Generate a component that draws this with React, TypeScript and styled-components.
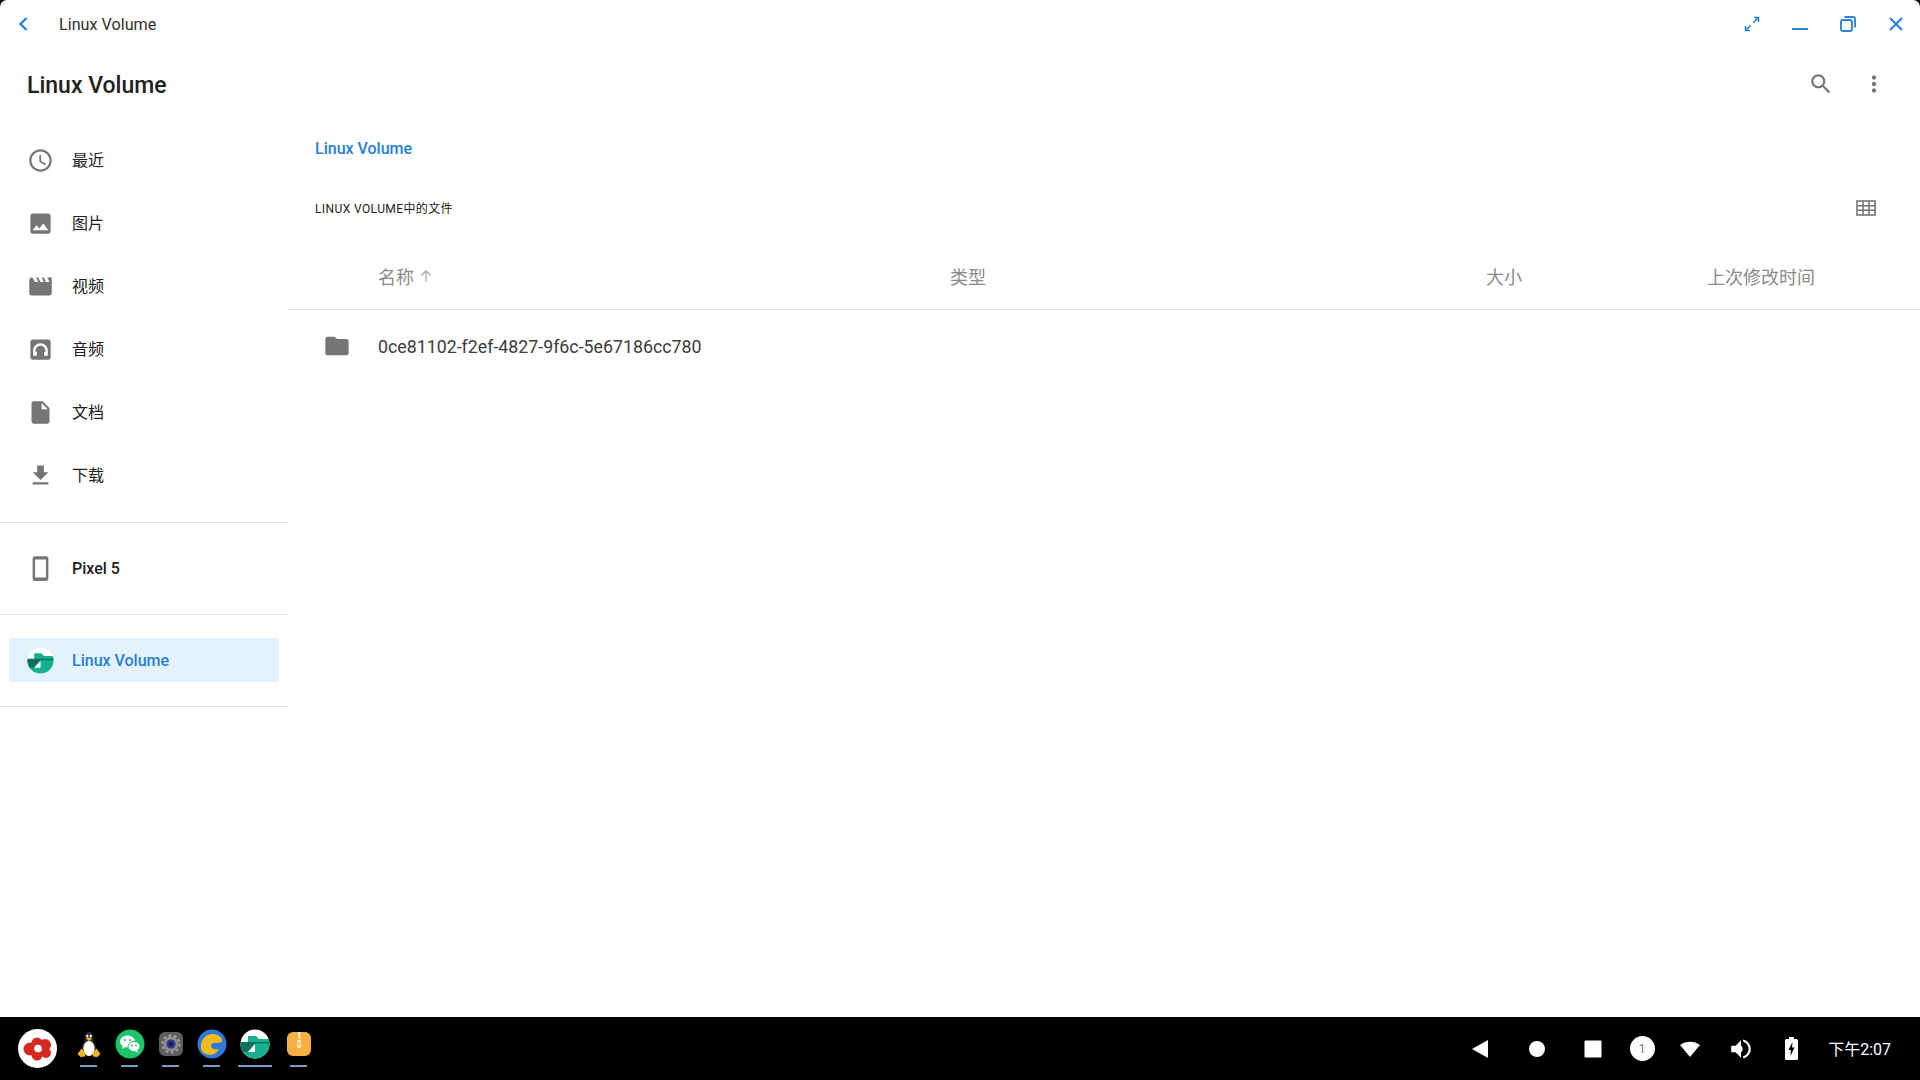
import React from 'react';
import styled, { createGlobalStyle } from 'styled-components';

const GlobalStyle = createGlobalStyle`
  html, body {
    margin: 0;
    height: 100%;
    background: #000;
  }
  body {
    font-family: Roboto, "Noto Sans CJK SC", sans-serif;
    overflow: hidden;
  }
`;

const Screen = styled.div`
  width: 1920px;
  height: 1080px;
  display: flex;
  flex-direction: column;
  background: #000;
`;

const AppWindow = styled.div`
  height: 1017px;
  display: flex;
  flex-direction: column;
  background: #fff;
  border-radius: 7px 7px 0 0;
  overflow: hidden;
`;

const TitleBar = styled.div`
  height: 48px;
  display: flex;
  align-items: center;
`;

const BackButton = styled.div`
  width: 46px;
  height: 48px;
  display: flex;
  align-items: center;
  justify-content: center;
  color: #2680d4;
`;

const WindowTitle = styled.div`
  flex: 1;
  margin-left: 13px;
  font-size: 16.2px;
  color: #303030;
`;

const WindowButton = styled.div`
  width: 48px;
  height: 48px;
  display: flex;
  align-items: center;
  justify-content: center;
  color: #2b84d8;
`;

const Toolbar = styled.div`
  height: 72px;
  display: flex;
  align-items: center;
  padding: 0 20px 0 27px;
`;

const ToolbarTitle = styled.h1`
  flex: 1;
  margin: 0;
  padding-top: 3px;
  font-size: 23px;
  font-weight: 500;
  color: #212121;
`;

const ToolbarAction = styled.div`
  width: 53px;
  height: 48px;
  display: flex;
  align-items: center;
  justify-content: center;
  color: #757575;
`;

const Body = styled.div`
  flex: 1;
  display: flex;
  min-height: 0;
`;

const Sidebar = styled.nav`
  width: 288px;
  flex-shrink: 0;
`;

const NavSection = styled.div<{ $first?: boolean }>`
  padding: ${(p) => (p.$first ? '9px 0 15px' : '14px 0')};
  border-bottom: 1px solid #e0e0e0;
`;

const NavRow = styled.div<{ $active?: boolean }>`
  height: ${(p) => (p.$active ? '44px' : '63px')};
  margin: ${(p) => (p.$active ? '9px 9px 10px' : '0')};
  padding-left: ${(p) => (p.$active ? '18px' : '27px')};
  display: flex;
  align-items: center;
  gap: 18px;
  background: ${(p) => (p.$active ? '#e3f2fd' : 'transparent')};
  border-radius: 2px;
  color: ${(p) => (p.$active ? '#2680d4' : '#212121')};
`;

const NavIcon = styled.span`
  width: 27px;
  height: 27px;
  display: flex;
  color: #757575;
`;

const NavLabel = styled.span<{ $strong?: boolean; $cjk?: boolean }>`
  font-size: 16px;
  font-weight: ${(p) => (p.$strong ? 500 : 400)};
  margin-bottom: ${(p) => (p.$cjk ? '3px' : '0')};
`;

const Main = styled.main`
  flex: 1;
  min-width: 0;
`;

const Breadcrumb = styled.div`
  height: 56px;
  display: flex;
  align-items: center;
  padding-left: 27px;
  font-size: 16px;
  font-weight: 500;
  color: #2680d4;
`;

const SectionHead = styled.div`
  height: 64px;
  display: flex;
  align-items: center;
  justify-content: space-between;
  padding: 0 44px 0 27px;
  color: #757575;
`;

const SectionLabel = styled.div`
  margin-bottom: 2px;
  font-size: 12px;
  letter-spacing: 0.4px;
  text-transform: uppercase;
  color: #212121;
`;

const tableColumns = '90px 572px 350px 222px 293px';

const TableHead = styled.div`
  margin-top: 4px;
  height: 66px;
  padding-bottom: 2px;
  box-sizing: border-box;
  display: grid;
  grid-template-columns: ${tableColumns};
  align-items: center;
  border-bottom: 1px solid #e0e0e0;
  font-size: 18px;
  color: #8a8a8a;
`;

const HeadCell = styled.div<{ $column: number; $right?: boolean }>`
  grid-column: ${(p) => p.$column};
  display: flex;
  align-items: center;
  gap: 5px;
  justify-content: ${(p) => (p.$right ? 'flex-end' : 'flex-start')};
`;

const FileRow = styled.div`
  height: 72px;
  display: grid;
  grid-template-columns: ${tableColumns};
  align-items: center;
`;

const FileIcon = styled.div`
  display: flex;
  justify-content: center;
  padding-left: 8px;
  color: #757575;
`;

const FileName = styled.div`
  grid-column: 2 / 4;
  font-size: 17.8px;
  color: #3c3c3c;
`;

const Taskbar = styled.footer`
  height: 63px;
  display: flex;
  align-items: center;
`;

const Launcher = styled.div`
  width: 39px;
  height: 39px;
  margin: 0 11px 0 18px;
  border-radius: 50%;
  background: #fff;
  display: flex;
  align-items: center;
  justify-content: center;
`;

const Apps = styled.div`
  flex: 1;
  display: flex;
  align-items: flex-start;
  height: 63px;
  padding-top: 12px;
  box-sizing: border-box;
`;

const AppSlot = styled.div<{ $wide?: boolean }>`
  width: ${(p) => (p.$wide ? 46 : 41)}px;
  display: flex;
  flex-direction: column;
  align-items: center;
`;

const AppIcon = styled.div`
  height: 30px;
  display: flex;
  align-items: center;
  justify-content: center;
`;

const AppBar = styled.div<{ $wide?: boolean }>`
  width: ${(p) => (p.$wide ? 34 : 17)}px;
  height: 2px;
  margin-top: 6px;
  background: #6f9fc4;
`;

const Tray = styled.div`
  display: flex;
  align-items: center;
  padding-right: 29px;
`;

const TraySlot = styled.div<{ $width: number }>`
  width: ${(p) => p.$width}px;
  display: flex;
  justify-content: center;
  color: #fff;
`;

const NoticeBadge = styled.div`
  width: 25px;
  height: 25px;
  border-radius: 50%;
  background: #fff;
  color: #777;
  font-size: 12px;
  display: flex;
  align-items: center;
  justify-content: center;
`;

const Clock = styled.div`
  margin: 0 0 2px 11px;
  font-size: 16px;
  color: #fff;
`;

const Glyph = ({ d, size = 27 }: { d: string; size?: number }) => (
  <svg width={size} height={size} viewBox="0 0 24 24" fill="currentColor" fillRule="evenodd">
    <path d={d} />
  </svg>
);

const navItems = [
  { label: '最近', d: 'M11.99 2C6.47 2 2 6.48 2 12s4.47 10 9.99 10C17.52 22 22 17.52 22 12S17.52 2 11.99 2zM12 20c-4.42 0-8-3.58-8-8s3.58-8 8-8 8 3.58 8 8-3.58 8-8 8zm.5-13H11v6l5.25 3.15.75-1.23-4.5-2.67z' },
  { label: '图片', d: 'M21 19V5c0-1.1-.9-2-2-2H5c-1.1 0-2 .9-2 2v14c0 1.1.9 2 2 2h14c1.1 0 2-.9 2-2zM8.5 13.5l2.5 3.01L14.5 12l4.5 6H5l3.5-4.5z' },
  { label: '视频', d: 'M18 4l2 4h-3l-2-4h-2l2 4h-3l-2-4H8l2 4H7L5 4H4c-1.1 0-1.99.9-1.99 2L2 18c0 1.1.9 2 2 2h16c1.1 0 2-.9 2-2V4h-4z' },
  { label: '音频', d: 'M5 3h14c1.1 0 2 .9 2 2v14c0 1.1-.9 2-2 2H5c-1.1 0-2-.9-2-2V5c0-1.1.9-2 2-2zM12 6.5C8.4 6.5 5.5 9.4 5.5 13v4.5h3.3V14H7.6v-1c0-2.4 2-4.4 4.4-4.4s4.4 2 4.4 4.4v1h-1.2v3.5h3.3V13c0-3.6-2.9-6.5-6.5-6.5z' },
  { label: '文档', d: 'M6 2c-1.1 0-1.99.9-1.99 2L4 20c0 1.1.89 2 1.99 2H18c1.1 0 2-.9 2-2V8l-6-6H6zm7 7V3.5L18.5 9H13z' },
  { label: '下载', d: 'M19 9h-4V3H9v6H5l7 7 7-7zM5 18v2h14v-2H5z' },
];

const TuxIcon = () => (
  <svg width="26" height="27" viewBox="0 0 26 27">
    <ellipse cx="13" cy="8" rx="4.6" ry="7.5" fill="#2a2a2a" />
    <ellipse cx="13" cy="17" rx="7" ry="8.5" fill="#2a2a2a" />
    <ellipse cx="13" cy="17.5" rx="5.6" ry="7.5" fill="#fff" />
    <ellipse cx="11.3" cy="5" rx="1.1" ry="1.6" fill="#fff" />
    <ellipse cx="14.7" cy="5" rx="1.1" ry="1.6" fill="#fff" />
    <path d="M10 7.5 L13 6.5 L16 7.5 L13 10 Z" fill="#f5b324" />
    <path d="M1.5 23 L5.5 17.5 L9.5 22 L9 25.5 L4.5 26 Z" fill="#f5b324" />
    <path d="M24.5 23 L20.5 17.5 L16.5 22 L17 25.5 L21.5 26 Z" fill="#f5b324" />
  </svg>
);

const WeChatIcon = () => (
  <svg width="30" height="30" viewBox="0 0 30 30">
    <circle cx="15" cy="15" r="14.5" fill="#1ec468" />
    <ellipse cx="12.5" cy="12.5" rx="7.5" ry="6" fill="#fff" />
    <path d="M8 16 L7 20 L11.5 17.5 Z" fill="#fff" />
    <ellipse cx="19" cy="17.5" rx="6" ry="5" fill="#fff" stroke="#1ec468" strokeWidth="1" />
    <path d="M22 21 L23.5 24 L19.5 22 Z" fill="#fff" />
    <circle cx="10" cy="11" r="1" fill="#1ec468" />
    <circle cx="15" cy="11" r="1" fill="#1ec468" />
    <circle cx="17" cy="16.5" r="0.9" fill="#1ec468" />
    <circle cx="21" cy="16.5" r="0.9" fill="#1ec468" />
  </svg>
);

const SettingsIcon = () => (
  <svg width="26" height="26" viewBox="0 0 26 26">
    <rect x="1" y="1" width="24" height="24" rx="6" fill="#5e5e60" />
    <circle cx="13" cy="13" r="7.5" fill="#8d8d90" />
    <circle cx="13" cy="13" r="8.6" fill="none" stroke="#a4a4a6" strokeWidth="2" strokeDasharray="2.7 2.7" />
    <circle cx="13" cy="13" r="4.6" fill="#2f3690" />
    <circle cx="13" cy="13" r="1.9" fill="#15173d" />
  </svg>
);

const BrowserIcon = () => (
  <svg width="30" height="30" viewBox="0 0 30 30">
    <circle cx="15" cy="15" r="14.5" fill="#2f79d8" />
    <path d="M4 19 C3 10 10 4 17 5 C23 6 26 10 25 13 L20 14 C17 13 14 14 14 17 C14 20 18 21 22 20 C19 26 13 27 9 25 C6 24 4 22 4 19 Z" fill="#f4bb1e" />
  </svg>
);

const FilesIcon = ({ size = 30 }: { size?: number }) => (
  <svg width={size} height={size} viewBox="0 0 30 30">
    <defs>
      <clipPath id="files-disc">
        <circle cx="15" cy="15" r="14.5" />
      </clipPath>
    </defs>
    <circle cx="15" cy="15" r="14.5" fill="#fff" />
    <g clipPath="url(#files-disc)">
      <path d="M8 7 H16 L19 10 H30 V30 H0 V14 H8 Z" fill="#14b08f" />
      <path d="M0 13 H30 V14.6 H15 L8 23 H0 Z" fill="#0f6f60" />
      <path d="M8 23 L15 15 V23 Z" fill="#fff" />
    </g>
  </svg>
);

const ArchiveIcon = () => (
  <svg width="26" height="26" viewBox="0 0 26 26">
    <rect x="1" y="1" width="24" height="24" rx="6" fill="#f7ae42" />
    <rect x="12" y="1" width="2.4" height="7" fill="#fde9bd" />
    <rect x="11" y="9" width="4" height="8" rx="1" fill="#fde9bd" />
    <rect x="12.2" y="11" width="1.6" height="3" fill="#f7ae42" />
  </svg>
);

export default function App() {
  return (
    <Screen>
      <GlobalStyle />
      <AppWindow>
        <TitleBar>
          <BackButton>
            <svg width="14" height="18" viewBox="0 0 14 18" fill="none" stroke="currentColor" strokeWidth="2.4">
              <path d="M10.5 3 L4.5 9 L10.5 15" />
            </svg>
          </BackButton>
          <WindowTitle>Linux Volume</WindowTitle>
          <WindowButton>
            <svg width="16" height="16" viewBox="0 0 16 16" fill="none" stroke="currentColor" strokeWidth="1.6">
              <path d="M9.5 6.5 L14 2 M10 1.5 H14.5 V6 M6.5 9.5 L2 14 M1.5 10 V14.5 H6" />
            </svg>
          </WindowButton>
          <WindowButton>
            <svg width="18" height="18" viewBox="0 0 18 18" style={{ marginTop: 10 }}>
              <rect x="1" y="8" width="16" height="2" fill="currentColor" />
            </svg>
          </WindowButton>
          <WindowButton>
            <svg width="16" height="16" viewBox="0 0 16 16" fill="none" stroke="currentColor" strokeWidth="1.9">
              <rect x="1" y="4" width="11" height="11" rx="2" />
              <path d="M4.5 1 H13 a2 2 0 0 1 2 2 V11.5" />
            </svg>
          </WindowButton>
          <WindowButton>
            <svg width="16" height="16" viewBox="0 0 16 16" fill="none" stroke="currentColor" strokeWidth="2.2">
              <path d="M2 2 L14 14 M14 2 L2 14" />
            </svg>
          </WindowButton>
        </TitleBar>
        <Toolbar>
          <ToolbarTitle>Linux Volume</ToolbarTitle>
          <ToolbarAction>
            <Glyph size={26} d="M15.5 14h-.79l-.28-.27C15.41 12.59 16 11.11 16 9.5 16 5.91 13.09 3 9.5 3S3 5.91 3 9.5 5.91 16 9.5 16c1.61 0 3.09-.59 4.23-1.57l.27.28v.79l5 4.99L20.49 19l-4.99-5zm-6 0C7.01 14 5 11.99 5 9.5S7.01 5 9.5 5 14 7.01 14 9.5 11.99 14 9.5 14z" />
          </ToolbarAction>
          <ToolbarAction>
            <Glyph size={26} d="M12 8c1.1 0 2-.9 2-2s-.9-2-2-2-2 .9-2 2 .9 2 2 2zm0 2c-1.1 0-2 .9-2 2s.9 2 2 2 2-.9 2-2-.9-2-2-2zm0 6c-1.1 0-2 .9-2 2s.9 2 2 2 2-.9 2-2-.9-2-2-2z" />
          </ToolbarAction>
        </Toolbar>
        <Body>
          <Sidebar>
            <NavSection $first>
              {navItems.map((item) => (
                <NavRow key={item.label}>
                  <NavIcon>
                    <Glyph d={item.d} />
                  </NavIcon>
                  <NavLabel $cjk>{item.label}</NavLabel>
                </NavRow>
              ))}
            </NavSection>
            <NavSection>
              <NavRow>
                <NavIcon>
                  <Glyph d="M17 1.01L7 1c-1.1 0-2 .9-2 2v18c0 1.1.9 2 2 2h10c1.1 0 2-.9 2-2V3c0-1.1-.9-1.99-2-1.99zM16.8 20H7.2V4h9.6v16z" />
                </NavIcon>
                <NavLabel $strong>Pixel 5</NavLabel>
              </NavRow>
            </NavSection>
            <NavSection>
              <NavRow $active>
                <NavIcon>
                  <FilesIcon size={27} />
                </NavIcon>
                <NavLabel $strong>Linux Volume</NavLabel>
              </NavRow>
            </NavSection>
          </Sidebar>
          <Main>
            <Breadcrumb>Linux Volume</Breadcrumb>
            <SectionHead>
              <SectionLabel>Linux Volume中的文件</SectionLabel>
              <svg width="20" height="16" viewBox="0 0 20 16" fill="none" stroke="currentColor" strokeWidth="1.6">
                <rect x="1" y="1" width="18" height="14" />
                <path d="M7 1 V15 M13 1 V15 M1 5.7 H19 M1 10.3 H19" />
              </svg>
            </SectionHead>
            <TableHead>
              <HeadCell $column={2}>
                名称
                <svg width="14" height="14" viewBox="0 0 14 14" fill="none" stroke="#a8a8a8" strokeWidth="1.3">
                  <path d="M7 12.5 V2 M2.5 6.5 L7 2 L11.5 6.5" />
                </svg>
              </HeadCell>
              <HeadCell $column={3}>类型</HeadCell>
              <HeadCell $column={4} $right>大小</HeadCell>
              <HeadCell $column={5} $right>上次修改时间</HeadCell>
            </TableHead>
            <FileRow>
              <FileIcon>
                <Glyph size={28} d="M10 4H4c-1.1 0-1.99.9-1.99 2L2 18c0 1.1.9 2 2 2h16c1.1 0 2-.9 2-2V8c0-1.1-.9-2-2-2h-8l-2-2z" />
              </FileIcon>
              <FileName>0ce81102-f2ef-4827-9f6c-5e67186cc780</FileName>
            </FileRow>
          </Main>
        </Body>
      </AppWindow>
      <Taskbar>
        <Launcher>
          <svg width="32" height="30" viewBox="0 0 32 30" fill="#d5281f">
            <circle cx="8" cy="15" r="6.5" />
            <circle cx="15" cy="9" r="5.5" />
            <circle cx="23" cy="11" r="6" />
            <circle cx="24" cy="19" r="5" />
            <circle cx="15" cy="21" r="5.5" />
            <circle cx="16" cy="14.5" r="3.8" fill="#fff" />
          </svg>
        </Launcher>
        <Apps>
          <AppSlot><AppIcon><TuxIcon /></AppIcon><AppBar /></AppSlot>
          <AppSlot><AppIcon><WeChatIcon /></AppIcon><AppBar /></AppSlot>
          <AppSlot><AppIcon><SettingsIcon /></AppIcon><AppBar /></AppSlot>
          <AppSlot><AppIcon><BrowserIcon /></AppIcon><AppBar /></AppSlot>
          <AppSlot $wide><AppIcon><FilesIcon /></AppIcon><AppBar $wide /></AppSlot>
          <AppSlot><AppIcon><ArchiveIcon /></AppIcon><AppBar /></AppSlot>
        </Apps>
        <Tray>
          <TraySlot $width={58}>
            <svg width="18" height="20" viewBox="0 0 18 20" fill="currentColor"><path d="M17 1 V19 L1 10 Z" /></svg>
          </TraySlot>
          <TraySlot $width={55}>
            <svg width="18" height="18" viewBox="0 0 18 18" fill="currentColor"><circle cx="9" cy="9" r="8" /></svg>
          </TraySlot>
          <TraySlot $width={57}>
            <svg width="18" height="18" viewBox="0 0 18 18" fill="currentColor"><rect x="0.5" y="0.5" width="17" height="17" rx="1" /></svg>
          </TraySlot>
          <TraySlot $width={42}>
            <NoticeBadge>1</NoticeBadge>
          </TraySlot>
          <TraySlot $width={53}>
            <svg width="22" height="18" viewBox="0 0 22 18" fill="currentColor"><path d="M1 5 C6 0.5 16 0.5 21 5 L11 17 Z" /></svg>
          </TraySlot>
          <TraySlot $width={49}>
            <svg width="26" height="26" viewBox="0 0 24 24" fill="currentColor">
              <path d="M3 9v6h4l5 5V4L7 9H3zm10.5 3c0-1.77-1.02-3.29-2.5-4.03v8.05c1.48-.73 2.5-2.25 2.5-4.02zM14 3.23v2.06c2.89.86 5 3.54 5 6.71s-2.11 5.85-5 6.71v2.06c4.01-.91 7-4.49 7-8.77s-2.99-7.86-7-8.77z" />
            </svg>
          </TraySlot>
          <TraySlot $width={52}>
            <svg width="13" height="23" viewBox="0 0 13 23" fill="currentColor">
              <path d="M4 0 H9 V2 H11.5 A1.5 1.5 0 0 1 13 3.5 V21.5 A1.5 1.5 0 0 1 11.5 23 H1.5 A1.5 1.5 0 0 1 0 21.5 V3.5 A1.5 1.5 0 0 1 1.5 2 H4 Z" />
              <path d="M7.5 5 L3.5 13 H6 L5.5 19 L9.5 10.5 H7 Z" fill="#000" />
            </svg>
          </TraySlot>
          <Clock>下午2:07</Clock>
        </Tray>
      </Taskbar>
    </Screen>
  );
}
